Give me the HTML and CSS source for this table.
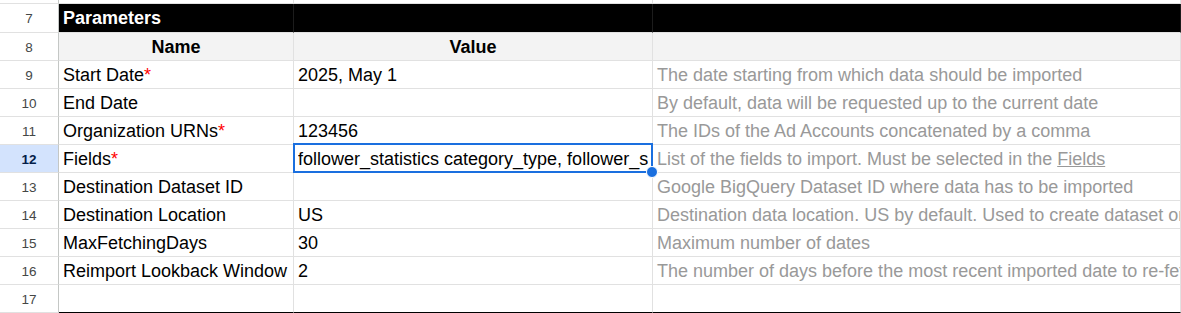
FILE: index.html
```html
<!DOCTYPE html>
<html>
<head>
<meta charset="utf-8">
<link rel="stylesheet" href="styles.css">
</head>
<body>
<div class="sheet">
  <div class="rh top"></div><div class="c top"></div><div class="c top"></div><div class="c top"></div>

  <div class="rh">7</div><div class="c title">Parameters</div><div class="c title"></div><div class="c title"></div>

  <div class="rh">8</div><div class="c head">Name</div><div class="c head">Value</div><div class="c head"></div>

  <div class="rh">9</div><div class="c"><span>Start Date<span class="req">*</span></span></div><div class="c">2025, May 1</div><div class="c desc">The date starting from which data should be imported</div>

  <div class="rh">10</div><div class="c">End Date</div><div class="c"></div><div class="c desc">By default, data will be requested up to the current date</div>

  <div class="rh">11</div><div class="c"><span>Organization URNs<span class="req">*</span></span></div><div class="c">123456</div><div class="c desc">The IDs of the Ad Accounts concatenated by a comma</div>

  <div class="rh active">12</div><div class="c"><span>Fields<span class="req">*</span></span></div><div class="c selected"><span class="clip">follower_statistics category_type, follower_statistics seniority, follower_statistics function</span></div><div class="c desc"><span>List of the fields to import. Must be selected in the <span class="link">Fields</span></span></div>

  <div class="rh">13</div><div class="c">Destination Dataset ID</div><div class="c"></div><div class="c desc">Google BigQuery Dataset ID where data has to be imported</div>

  <div class="rh">14</div><div class="c">Destination Location</div><div class="c">US</div><div class="c desc">Destination data location. US by default. Used to create dataset only</div>

  <div class="rh">15</div><div class="c">MaxFetchingDays</div><div class="c">30</div><div class="c desc">Maximum number of dates</div>

  <div class="rh">16</div><div class="c">Reimport Lookback Window</div><div class="c">2</div><div class="c desc">The number of days before the most recent imported date to re-fetch</div>

  <div class="rh">17</div><div class="c last"></div><div class="c last"></div><div class="c last"></div>
</div>
</body>
</html>
```

FILE: styles.css
```css
html, body {
  margin: 0;
  padding: 0;
  background: #ffffff;
  overflow: hidden;
}

body {
  width: 1181px;
  height: 313px;
  font-family: "Liberation Sans", Arial, sans-serif;
}

.sheet {
  display: grid;
  grid-template-columns: 59px 235px 359px 528px;
  grid-template-rows: 4px 29px repeat(10, 28px);
  width: 1181px;
}

.rh {
  box-sizing: border-box;
  border-right: 1px solid #c4c7c5;
  border-bottom: 1px solid #e1e1e1;
  display: flex;
  align-items: center;
  justify-content: center;
  padding-top: 1px;
  font-size: 13.5px;
  color: #444746;
  background: #ffffff;
}

.rh.active {
  background: #d3e3fd;
  color: #041e49;
  font-weight: bold;
}

.c {
  box-sizing: border-box;
  border-right: 1px solid #e1e1e1;
  border-bottom: 1px solid #e1e1e1;
  display: flex;
  align-items: center;
  padding: 1px 4px 0 4px;
  font-size: 18px;
  color: #000000;
  white-space: nowrap;
  overflow: hidden;
}

.top {
  padding: 0;
}

.title {
  background: #000000;
  color: #ffffff;
  font-weight: bold;
  border-right-color: #1c1c1c;
  border-bottom-color: #e1e1e1;
}

.head {
  background: #f3f3f3;
  font-weight: bold;
  justify-content: center;
}

.desc {
  color: #999999;
}

.req {
  color: #ff0000;
}

.link {
  text-decoration: underline;
}

.last {
  border-bottom-color: #000000;
}

.selected {
  position: relative;
  overflow: visible;
}

.clip {
  display: block;
  overflow: hidden;
  white-space: nowrap;
  width: 100%;
}

.selected::before {
  content: "";
  position: absolute;
  top: -2px;
  left: -1px;
  right: -1px;
  bottom: -1px;
  border: 2px solid #1a6fdf;
  pointer-events: none;
}

.selected::after {
  content: "";
  position: absolute;
  right: -6px;
  bottom: -6px;
  width: 10px;
  height: 10px;
  border-radius: 50%;
  background: #1a6fdf;
  border: 1px solid #ffffff;
  z-index: 2;
}
```
